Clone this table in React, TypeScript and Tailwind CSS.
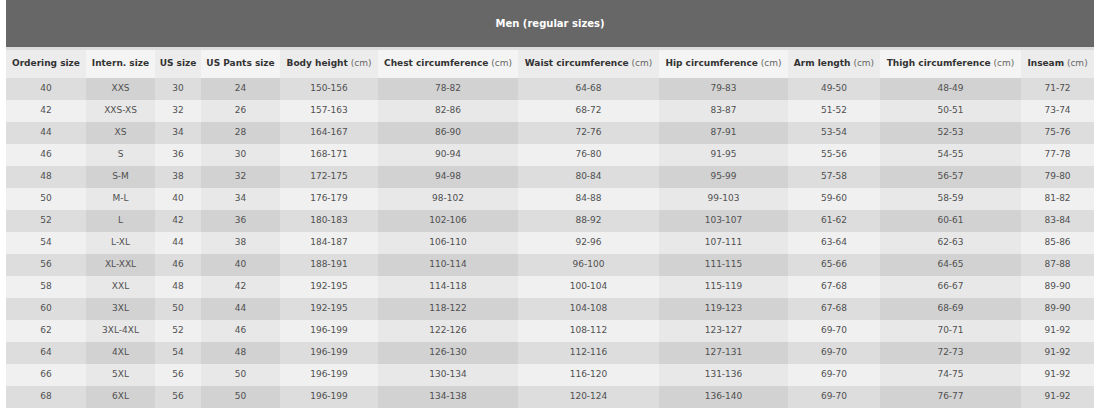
const headers: { label: string; unit?: boolean }[] = [
  { label: "Ordering size" },
  { label: "Intern. size" },
  { label: "US size" },
  { label: "US Pants size" },
  { label: "Body height", unit: true },
  { label: "Chest circumference", unit: true },
  { label: "Waist circumference", unit: true },
  { label: "Hip circumference", unit: true },
  { label: "Arm length", unit: true },
  { label: "Thigh circumference", unit: true },
  { label: "Inseam", unit: true },
];

const widths = [80, 69, 46, 79, 98, 140, 141, 129, 92, 141, 73];

const rows: string[][] = [
  ["40", "XXS", "30", "24", "150-156", "78-82", "64-68", "79-83", "49-50", "48-49", "71-72"],
  ["42", "XXS-XS", "32", "26", "157-163", "82-86", "68-72", "83-87", "51-52", "50-51", "73-74"],
  ["44", "XS", "34", "28", "164-167", "86-90", "72-76", "87-91", "53-54", "52-53", "75-76"],
  ["46", "S", "36", "30", "168-171", "90-94", "76-80", "91-95", "55-56", "54-55", "77-78"],
  ["48", "S-M", "38", "32", "172-175", "94-98", "80-84", "95-99", "57-58", "56-57", "79-80"],
  ["50", "M-L", "40", "34", "176-179", "98-102", "84-88", "99-103", "59-60", "58-59", "81-82"],
  ["52", "L", "42", "36", "180-183", "102-106", "88-92", "103-107", "61-62", "60-61", "83-84"],
  ["54", "L-XL", "44", "38", "184-187", "106-110", "92-96", "107-111", "63-64", "62-63", "85-86"],
  ["56", "XL-XXL", "46", "40", "188-191", "110-114", "96-100", "111-115", "65-66", "64-65", "87-88"],
  ["58", "XXL", "48", "42", "192-195", "114-118", "100-104", "115-119", "67-68", "66-67", "89-90"],
  ["60", "3XL", "50", "44", "192-195", "118-122", "104-108", "119-123", "67-68", "68-69", "89-90"],
  ["62", "3XL-4XL", "52", "46", "196-199", "122-126", "108-112", "123-127", "69-70", "70-71", "91-92"],
  ["64", "4XL", "54", "48", "196-199", "126-130", "112-116", "127-131", "69-70", "72-73", "91-92"],
  ["66", "5XL", "56", "50", "196-199", "130-134", "116-120", "131-136", "69-70", "74-75", "91-92"],
  ["68", "6XL", "56", "50", "196-199", "134-138", "120-124", "136-140", "69-70", "76-77", "91-92"],
];

function cellBg(row: number, col: number) {
  const oddRow = row % 2 === 0;
  const oddCol = col % 2 === 0;
  if (oddRow) return oddCol ? "bg-[#dddddd]" : "bg-[#d2d2d2]";
  return oddCol ? "bg-[#f0f0f0]" : "bg-[#e8e8e8]";
}

export default function App() {
  return (
    <div className="w-[1100px] h-[414px] bg-white pl-[6px] font-['DejaVu_Sans',Verdana,sans-serif]">
      <table className="table-fixed border-collapse w-[1088px]">
        <colgroup>
          {widths.map((w, i) => (
            <col key={i} style={{ width: w }} />
          ))}
        </colgroup>
        <thead>
          <tr>
            <th
              colSpan={11}
              className="h-[48px] bg-[#676767] border-b-[3px] border-[#dcdcdc] text-white text-[10px] font-bold text-center"
            >
              Men (regular sizes)
            </th>
          </tr>
          <tr>
            {headers.map((h, i) => (
              <th
                key={h.label}
                className={`h-[30px] px-0 text-[9px] font-bold text-[#333333] text-center whitespace-nowrap ${
                  i % 2 === 0 ? "bg-[#ececec]" : "bg-[#f4f4f4]"
                }`}
              >
                {h.label}
                {h.unit && (
                  <span className="font-normal text-[#666666]"> (cm)</span>
                )}
              </th>
            ))}
          </tr>
        </thead>
        <tbody>
          {rows.map((r, ri) => (
            <tr key={ri}>
              {r.map((v, ci) => (
                <td
                  key={ci}
                  className={`h-[22px] p-0 text-center text-[9px] text-[#505050] ${cellBg(ri, ci)}`}
                >
                  {v}
                </td>
              ))}
            </tr>
          ))}
        </tbody>
      </table>
    </div>
  );
}
